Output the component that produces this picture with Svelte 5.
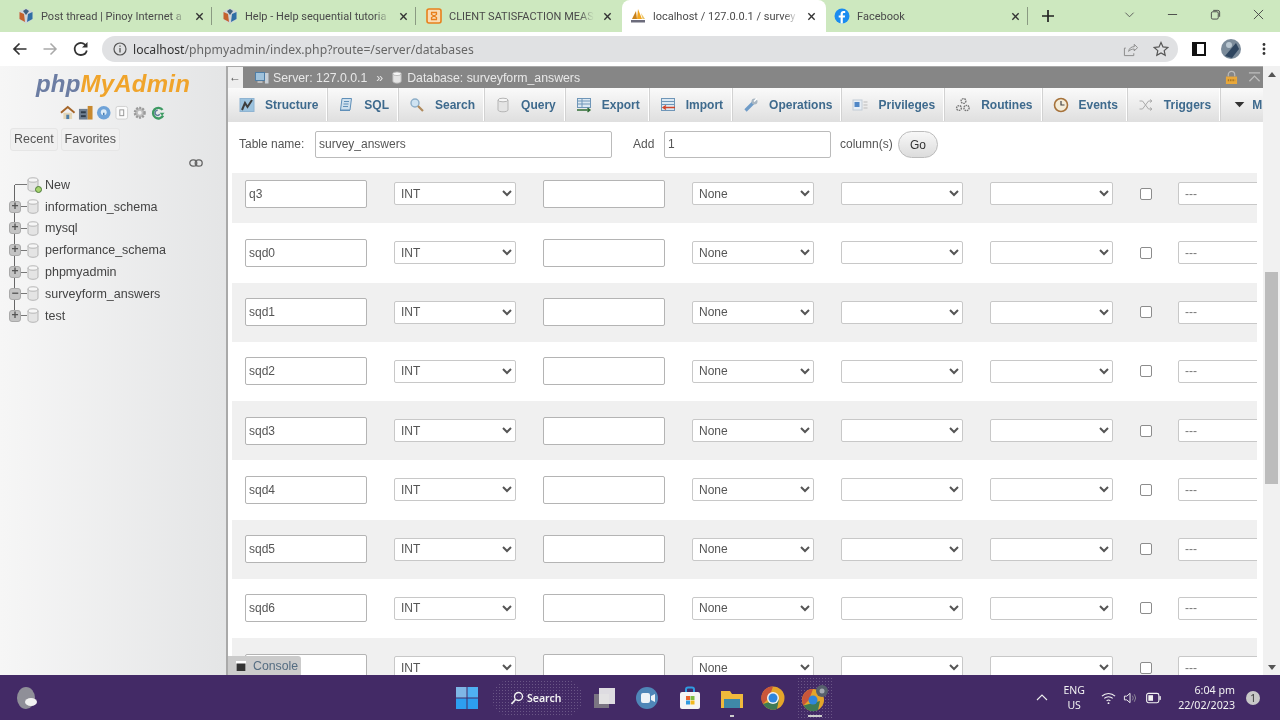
<script>
  const browserTabs = [
    { icon: 'cube', title: 'Post thread | Pinoy Internet a' },
    { icon: 'cube', title: 'Help - Help sequential tutoria' },
    { icon: 'xampp', title: 'CLIENT SATISFACTION MEAS' },
    { icon: 'sail', title: 'localhost / 127.0.0.1 / survey', active: true },
    { icon: 'fb', title: 'Facebook' }
  ];
  const dbs = [
    { n: 'information_schema', s: '+' },
    { n: 'mysql', s: '+' },
    { n: 'performance_schema', s: '+' },
    { n: 'phpmyadmin', s: '+' },
    { n: 'surveyform_answers', s: '-' },
    { n: 'test', s: '+' }
  ];
  const navTabs = [
    ['structure', 'Structure'], ['sql', 'SQL'], ['search', 'Search'], ['query', 'Query'],
    ['export', 'Export'], ['import', 'Import'], ['ops', 'Operations'], ['priv', 'Privileges'],
    ['routines', 'Routines'], ['events', 'Events'], ['triggers', 'Triggers']
  ];
  const rows = ['q3', 'sqd0', 'sqd1', 'sqd2', 'sqd3', 'sqd4', 'sqd5', 'sqd6', ''];
</script>

{#snippet fav(k)}
  <svg class="fav" viewBox="0 0 16 16">
    {#if k === 'cube'}
      <polygon points="8,0.500 14.500,3 14.500,11.500 8,15.500 1.500,11.500 1.500,3" fill="#cfd4d8" />
      <polygon points="1.500,4 6,6 7,14 1.500,11" fill="#c4622d" />
      <polygon points="14.500,4 10,6 9,14 14.500,11" fill="#2f6ea5" />
      <polygon points="5,3 8,1 11,3 8,7" fill="#3f5f7f" />
    {:else if k === 'xampp'}
      <rect x="1" y="1" width="14" height="14" rx="2" fill="#f9dcb4" stroke="#e8801c" stroke-width="1.600" />
      <path d="M5 4.500h6M5 11.500h6M5.500 4.500v2l5 3v2M10.500 4.500v2l-5 3v2" stroke="#e8801c" stroke-width="1.300" fill="none" />
    {:else if k === 'sail'}
      <polygon points="8,1 12,11 7,11" fill="#f2a51f" />
      <polygon points="6,3 7,11 2,11" fill="#c9821a" />
      <polygon points="11,5 15,11 12.500,11" fill="#e9c46a" />
      <rect x="1" y="12" width="14" height="2.500" fill="#6c6c7c" />
    {:else}
      <circle cx="8" cy="8" r="7.500" fill="#1a8cf0" />
      <path d="M8.800 15.400V9.600h2l.3-2.200H8.800V6c0-.7.3-1.100 1.200-1.100h1.200V3c-.4 0-1-.1-1.700-.1-1.800 0-2.900 1-2.900 2.900v1.600H4.700v2.200h1.900v5.800z" fill="#fff" />
    {/if}
  </svg>
{/snippet}

{#snippet cyl(w = 12)}
  <svg width={w} height="15" viewBox="0 0 12 15">
    <path d="M1 3v9c0 1.300 2.200 2.300 5 2.300s5-1 5-2.300V3z" fill="#e4e4e4" stroke="#b5b5b5" />
    <ellipse cx="6" cy="3" rx="5" ry="2.200" fill="#f6f6f6" stroke="#b5b5b5" />
  </svg>
{/snippet}

{#snippet nav(k)}
  <svg class="nav-ic" viewBox="0 0 16 16">
    {#if k === 'structure'}
      <rect x="1" y="1.500" width="14" height="13" fill="#9cc3df" stroke="#8fb4d2" />
      <path d="M3 13l3-7 2.500 4L13 3" stroke="#3d3d3d" stroke-width="2" fill="none" />
    {:else if k === 'sql'}
      <path d="M4 1.500h9.500L12 13H2.500z" fill="#cfe0ee" stroke="#5f8fb8" />
      <path d="M2 13.500h10M6 4.500h5M5.500 7h5M5 9.500h5" stroke="#5f8fb8" fill="none" />
    {:else if k === 'search'}
      <circle cx="6" cy="6" r="4" fill="#cfe3f2" stroke="#8daec8" stroke-width="1.400" />
      <path d="M9 9l5 5" stroke="#b08a5c" stroke-width="2.200" />
    {:else if k === 'query'}
      <path d="M3 3v10c0 1 2.300 1.800 5 1.800s5-.8 5-1.800V3z" fill="#e4e4e4" stroke="#b5b5b5" />
      <ellipse cx="8" cy="3" rx="5" ry="1.800" fill="#f6f6f6" stroke="#b5b5b5" />
    {:else if k === 'export'}
      <rect x="1.500" y="1.500" width="13" height="9" fill="#dce8f2" stroke="#6f96b8" />
      <path d="M1.500 4h13M1.500 7h13M6 1.500v9" stroke="#6f96b8" />
      <path d="M1 13h13M11.500 11l2.500 2-2.500 2" stroke="#2f6c35" stroke-width="1.300" fill="none" />
    {:else if k === 'import'}
      <rect x="1.500" y="1.500" width="13" height="12" fill="#dce8f2" stroke="#6f96b8" />
      <path d="M1.500 4.500h13M1.500 7.500h13" stroke="#6f96b8" />
      <path d="M15 10.500H3M6 8.500l-3 2 3 2" stroke="#d2452a" stroke-width="1.300" fill="none" />
    {:else if k === 'ops'}
      <path d="M2.500 13.500L10 6" stroke="#6f9cc8" stroke-width="3.200" />
      <circle cx="11.500" cy="4.500" r="3" fill="#a8b6c2" />
      <path d="M11 4.500l3-3" stroke="#fff" stroke-width="1.600" />
    {:else if k === 'priv'}
      <rect x="1" y="3" width="9" height="10" fill="#e6eef6" stroke="#c2ccd6" />
      <rect x="2.500" y="5" width="5" height="5" fill="#4f86c6" />
      <path d="M11.500 5h4M11.500 8h4M11.500 11h4" stroke="#bbb" />
    {:else if k === 'routines'}
      <circle cx="8.500" cy="4" r="2.400" fill="none" stroke="#777" stroke-width="1.400" stroke-dasharray="1.500 .7" />
      <circle cx="4" cy="11" r="2.400" fill="none" stroke="#777" stroke-width="1.400" stroke-dasharray="1.500 .7" />
      <circle cx="11.500" cy="11" r="2.600" fill="none" stroke="#777" stroke-width="1.400" stroke-dasharray="1.500 .7" />
    {:else if k === 'events'}
      <circle cx="8" cy="8" r="6.500" fill="#f4ecd8" stroke="#a6723a" stroke-width="1.600" />
      <path d="M8 4v4h3.500" stroke="#444" stroke-width="1.200" fill="none" />
    {:else}
      <path d="M1.500 4h3l6 8h3M1.500 12h3l6-8h3M12 2.500L14 4l-2 1.500M12 10.500l2 1.500-2 1.500" stroke="#aaa" fill="none" />
    {/if}
  </svg>
{/snippet}

<div class="screen">
  <div class="strip">
    {#each browserTabs as t}
      <div class="btab" class:active={t.active}>
        {@render fav(t.icon)}
        <span class="btitle">{t.title}</span>
        <svg class="bclose" viewBox="0 0 10 10"><path d="M1.500 1.500l7 7M8.500 1.500l-7 7" stroke="#333" stroke-width="1.500" /></svg>
      </div>
    {/each}
    <svg class="plus" viewBox="0 0 12 12"><path d="M6 0v12M0 6h12" stroke="#222" stroke-width="1.700" /></svg>
    <div class="winctl">
      <svg viewBox="0 0 12 12"><path d="M1.500 4l4.500 4.500L10.500 4" stroke="#555" fill="none" /></svg>
      <svg viewBox="0 0 12 12"><path d="M1 6h10" stroke="#444" /></svg>
      <svg viewBox="0 0 12 12"><rect x="1.500" y="3" width="7.500" height="8" rx="1.500" fill="none" stroke="#444" /><path d="M3.500 1.500h5a2 2 0 012 2v5" fill="none" stroke="#444" /></svg>
      <svg viewBox="0 0 12 12"><path d="M1 1l10 10M11 1L1 11" stroke="#444" /></svg>
    </div>
  </div>

  <div class="toolbar">
    <svg class="tb" viewBox="0 0 16 16"><path d="M14.500 8H2M7.500 2.500L2 8l5.500 5.500" stroke="#333" stroke-width="1.700" fill="none" /></svg>
    <svg class="tb" viewBox="0 0 16 16"><path d="M1.500 8H14M8.500 2.500L14 8l-5.500 5.500" stroke="#a9a9a9" stroke-width="1.500" fill="none" /></svg>
    <svg class="tb" viewBox="0 0 16 16"><path d="M13 5.200A6 6 0 108 14a6 6 0 005.800-4.500" stroke="#333" stroke-width="1.800" fill="none" /><path d="M14.500 1v5.500H9z" fill="#333" /></svg>
    <div class="addr">
      <svg class="info" viewBox="0 0 14 14"><circle cx="7" cy="7" r="6" fill="none" stroke="#555" stroke-width="1.200" /><path d="M7 6v4.500M7 3.500v1.300" stroke="#555" stroke-width="1.300" /></svg>
      <span class="url"><span class="host">localhost</span>/phpmyadmin/index.php?route=/server/databases</span>
      <svg class="share" viewBox="0 0 16 16"><path d="M3 6.500H1.500v8h10V12M6 10c.5-3.500 3-5 6-5V2.500L15.500 6 12 9.500V7.500c-2.500 0-4.500.8-6 2.500z" fill="none" stroke="#888" /></svg>
      <svg class="star" viewBox="0 0 16 16"><path d="M8 1.500l2 4.400 4.800.5-3.600 3.200 1 4.700L8 11.900l-4.200 2.400 1-4.700L1.200 6.400 6 5.900z" fill="none" stroke="#555" stroke-width="1.200" /></svg>
    </div>
    <div class="tools">
      <svg class="tool" viewBox="0 0 14 14"><rect x="1" y="1" width="12" height="12" fill="#fff" stroke="#111" stroke-width="2" /><rect x="1" y="1" width="4" height="12" fill="#111" /></svg>
      <svg class="avatar" viewBox="0 0 20 20"><circle cx="10" cy="10" r="10" fill="#7b8b9a" /><path d="M4 17L15 4l3 6-7 9z" fill="#2f4660" /><circle cx="8" cy="6" r="3" fill="#b9c6d0" /></svg>
      <svg class="tool" viewBox="0 0 14 14"><circle cx="7" cy="2.500" r="1.400" fill="#333" /><circle cx="7" cy="7" r="1.400" fill="#333" /><circle cx="7" cy="11.500" r="1.400" fill="#333" /></svg>
    </div>
  </div>

  <div class="content">
    <aside class="side">
      <div class="logo"><span class="php">php</span><span class="my">MyAdmin</span></div>
      <div class="quick">
        <svg viewBox="0 0 16 16"><path d="M1 8l7-6 7 6" stroke="#a5662a" stroke-width="2" fill="none" /><rect x="3.500" y="8" width="9" height="6.500" fill="#e4d7b8" /><rect x="6.500" y="10" width="3" height="4.500" fill="#4f7fa8" /></svg>
        <svg viewBox="0 0 16 16"><rect x="1" y="4" width="9" height="11" fill="#6f7f92" /><rect x="10" y="1" width="5" height="14" fill="#c8892e" /><rect x="3" y="6.500" width="5" height="2" fill="#2e3b4a" /><rect x="3" y="10.500" width="5" height="2" fill="#2e3b4a" /></svg>
        <svg viewBox="0 0 16 16"><circle cx="8" cy="8" r="7" fill="#6fa3d8" /><circle cx="8" cy="7.500" r="3" fill="#dcebf7" /><path d="M8 8v2.500" stroke="#3f78b0" stroke-width="1.500" /></svg>
        <svg viewBox="0 0 16 16"><rect x="2" y="1.500" width="12" height="13" rx="2" fill="#fbfbfb" stroke="#cfcfcf" /><rect x="6" y="5" width="4" height="6" fill="none" stroke="#999" /></svg>
        <svg viewBox="0 0 16 16"><circle cx="8" cy="8" r="5" fill="#bdbdbd" stroke="#9a9a9a" stroke-width="2.500" stroke-dasharray="2 1.200" /><circle cx="8" cy="8" r="2" fill="#eee" /></svg>
        <svg viewBox="0 0 16 16"><path d="M13 5a5.500 5.500 0 10.500 6" stroke="#3e9a63" stroke-width="2.400" fill="none" /><path d="M8 5.500a2.600 2.600 0 102 4" stroke="#5f7c9a" stroke-width="1.600" fill="none" /><path d="M10 8h5l-2.500 3z" fill="#3e9a63" /></svg>
      </div>
      <div class="pills"><span class="pill">Recent</span><span class="pill">Favorites</span></div>
      <div class="linkrow">
        <svg viewBox="0 0 14 8"><rect x=".8" y=".8" width="7" height="6.400" rx="3.200" fill="none" stroke="#666" stroke-width="1.300" /><rect x="6.200" y=".8" width="7" height="6.400" rx="3.200" fill="none" stroke="#666" stroke-width="1.300" /></svg>
      </div>
      <ul class="tree">
        <li class="tree-new">
          <span class="exp none"></span><span class="dash"></span>
          <span class="dbi">{@render cyl()}<i class="greendot"></i></span>
          <span>New</span>
        </li>
        {#each dbs as d}
          <li>
            <span class="exp">{d.s === '+' ? '+' : '−'}</span><span class="dash"></span>
            <span class="dbi">{@render cyl()}</span>
            <span>{d.n}</span>
          </li>
        {/each}
      </ul>
    </aside>

    <main class="main">
      <div class="crumbs">
        <span class="back">←</span>
        <svg class="crumb-ic srv" viewBox="0 0 14 12"><rect x=".5" y=".5" width="9" height="8" fill="#9fc2dc" stroke="#4f7ea6" /><rect x="10" y="1" width="3.500" height="10.500" fill="#c8d0d8" /><rect x="2.500" y="9" width="5" height="2" fill="#bbb" /></svg>
        <span>Server: 127.0.0.1</span>
        <span class="raquo">»</span>
        <span class="crumb-db">{@render cyl(10)}</span>
        <span>Database: surveyform_answers</span>
        <span class="crumb-right">
          <svg viewBox="0 0 14 16"><path d="M3.500 7V5a3.500 3.500 0 017 0v2" fill="none" stroke="#bbb" stroke-width="1.300" /><rect x="1" y="7" width="12" height="8" fill="#e9a83a" /><path d="M3 11h8" stroke="#a8741f" stroke-dasharray="1.500 1" stroke-width="2" /></svg>
          <svg viewBox="0 0 14 12"><path d="M1 1h12M1.500 10L7 4.500 12.500 10" stroke="#bdbdbd" stroke-width="1.400" fill="none" /></svg>
        </span>
      </div>

      <nav class="navtabs">
        {#each navTabs as [k, label]}
          <div class="ntab">{@render nav(k)}<span>{label}</span></div>
        {/each}
        <div class="ntab more"><svg class="caret" viewBox="0 0 12 8"><polygon points="0.500,1 11.500,1 6,7" fill="#333" /></svg><span>M</span></div>
      </nav>

      <div class="form">
        <label class="lab1" for="tn">Table name:</label>
        <input id="tn" class="tname" value="survey_answers" />
        <label class="lab2" for="ad">Add</label>
        <input id="ad" class="tadd" value="1" />
        <span class="lab3">column(s)</span>
        <button class="go">Go</button>
      </div>

      <div class="window">
        <div class="rows">
          {#each rows as r, i}
            <div class="row" class:alt={i % 2 === 0}>
              <input class="cell name" value={r} />
              <select class="cell"><option>INT</option></select>
              <input class="cell name" value="" />
              <select class="cell"><option>None</option></select>
              <select class="cell"><option></option></select>
              <select class="cell wide"><option></option></select>
              <input class="chk" type="checkbox" />
              <select class="cell last"><option>---</option></select>
            </div>
          {/each}
        </div>
      </div>

      <div class="console">
        <svg viewBox="0 0 12 12"><rect x=".5" y=".5" width="11" height="11" fill="#fff" stroke="#ccc" /><rect x="1.500" y="3.500" width="9" height="7.500" fill="#333" /></svg>
        <span>Console</span>
      </div>
    </main>

    <div class="scroll">
      <svg class="arrow" viewBox="0 0 8 5"><polygon points="4,0 8,5 0,5" fill="#555" /></svg>
      <div class="thumb"></div>
      <svg class="arrow down" viewBox="0 0 8 5"><polygon points="0,0 8,0 4,5" fill="#555" /></svg>
    </div>
  </div>

  <footer class="taskbar">
    <div class="tleft">
      <svg class="weather" viewBox="0 0 22 24"><ellipse cx="10" cy="12" rx="9" ry="11" fill="#8f8f98" /><ellipse cx="15" cy="16" rx="6" ry="4" fill="#f1f1f1" /></svg>
    </div>
    <div class="tcenter">
      <svg class="win" viewBox="0 0 22 22"><rect width="10.500" height="10.500" fill="#7fb6e6" /><rect x="11.500" width="10.500" height="10.500" fill="#4fb0f2" /><rect y="11.500" width="10.500" height="10.500" fill="#2d9ef0" /><rect x="11.500" y="11.500" width="10.500" height="10.500" fill="#2d9ef0" /></svg>
      <div class="tsearch">
        <svg viewBox="0 0 14 14"><circle cx="8.500" cy="5.500" r="4" fill="none" stroke="#f2f2f2" stroke-width="1.400" /><path d="M5.500 8.500L1.500 13" stroke="#f2f2f2" stroke-width="1.600" /></svg>
        <span>Search</span>
      </div>
      <svg class="ti view" viewBox="0 0 24 24"><rect x="1" y="8" width="15" height="14" fill="#7a7482" /><rect x="6" y="2" width="16" height="16" fill="#ececec" opacity=".92" /></svg>
      <svg class="ti" viewBox="0 0 24 24"><circle cx="12" cy="12" r="11" fill="#4f86b8" /><rect x="6" y="7" width="9" height="10" rx="2" fill="#eef3f8" /><path d="M16 10l4-2v8l-4-2z" fill="#eef3f8" /></svg>
      <svg class="ti" viewBox="0 0 24 24"><path d="M8 6V3.500a2 2 0 012-2h4a2 2 0 012 2V6" fill="none" stroke="#2f9ae0" stroke-width="2" /><rect x="2" y="6" width="20" height="17" rx="2" fill="#f4f4f4" /><rect x="8" y="10" width="4" height="4" fill="#e8622c" /><rect x="12.500" y="10" width="4" height="4" fill="#7dbb3f" /><rect x="8" y="14.500" width="4" height="4" fill="#2f9ae0" /><rect x="12.500" y="14.500" width="4" height="4" fill="#f2b91e" /></svg>
      <div class="ti-wrap">
        <svg class="ti" viewBox="0 0 24 24"><path d="M1 5h9l2 3h11v14H1z" fill="#f0b93c" /><rect x="4" y="13" width="16" height="9" fill="#3f88a8" /></svg>
        <i class="run"></i>
      </div>
      <svg class="ti" viewBox="0 0 24 24"><circle cx="12" cy="12" r="11.500" fill="#e4a52a" /><path d="M12 .5A11.500 11.500 0 002 18l6-6z" fill="#c9563a" /><path d="M2 18a11.500 11.500 0 0014 5l2-10z" fill="#3f7a55" /><circle cx="12" cy="12" r="6" fill="#f2f2f2" /><circle cx="12" cy="12" r="4.500" fill="#2f86dc" /></svg>
      <div class="ti-wrap act">
        <svg class="ti big" viewBox="0 0 28 28"><circle cx="12" cy="16" r="11" fill="#e4a52a" /><path d="M12 5A11 11 0 002.500 21.500L8 16z" fill="#c9563a" /><path d="M2.500 21.500A11 11 0 0017 26l2-9z" fill="#3f7a55" /><circle cx="12" cy="16" r="4.500" fill="#2f86dc" /><circle cx="21" cy="7" r="6" fill="#56606c" /><circle cx="21" cy="7" r="2.500" fill="#a4aab2" /></svg>
        <i class="run long"></i>
      </div>
    </div>
    <div class="tright">
      <svg class="caretup" viewBox="0 0 12 7"><path d="M1 6l5-5 5 5" fill="none" stroke="#eee" stroke-width="1.100" /></svg>
      <div class="lang"><span>ENG</span><span>US</span></div>
      <svg class="sys wifi" viewBox="0 0 16 14"><path d="M1 5a10 10 0 0114 0M3.500 7.500a6.500 6.500 0 019 0M6 10a3 3 0 014 0" fill="none" stroke="#f2f2f2" stroke-width="1.200" /><circle cx="8" cy="12.500" r="1" fill="#f2f2f2" /></svg>
      <svg class="sys" viewBox="0 0 16 14"><path d="M1.500 5v4h2.500l3.500 3V2L4 5z" fill="none" stroke="#f2f2f2" /><path d="M10 4.500a4 4 0 010 5M12 3a6.500 6.500 0 010 8" fill="none" stroke="#8f8a9a" /></svg>
      <svg class="sys" viewBox="0 0 16 12"><rect x=".7" y="1" width="13" height="10" rx="2" fill="none" stroke="#f2f2f2" stroke-width="1.200" /><rect x="2.500" y="3" width="5" height="6" fill="#f2f2f2" /><rect x="14.300" y="4" width="1.500" height="4" fill="#f2f2f2" /></svg>
      <div class="clock"><span>6:04 pm</span><span>22/02/2023</span></div>
      <span class="badge">1</span>
    </div>
  </footer>
</div>

<style>
  :global(body) { margin: 0; background: #fff; }
  .screen {
    width: 1280px; height: 720px; overflow: hidden; display: flex; flex-direction: column;
    font-family: "Liberation Sans", Arial, sans-serif; filter: blur(0.4px);
  }

  .strip { height: 32px; background: #cde8bf; display: flex; align-items: stretch; padding-left: 10px; box-sizing: border-box; }
  .btab {
    width: 204px; box-sizing: border-box; display: flex; align-items: center; gap: 7px; padding: 0 10px 0 8px;
    position: relative; font: 11px Roboto, sans-serif; color: #4a4a4a;
  }
  .btab::after { content: ""; position: absolute; right: 2px; top: 7px; height: 18px; width: 1px; background: #8a9a82; }
  .btab:nth-child(3)::after, .btab.active::after { display: none; }
  .btab.active { background: #fff; border-radius: 8px 8px 0 0; }
  .fav { width: 16px; height: 16px; flex: none; }
  .btitle {
    flex: 1; min-width: 0; white-space: nowrap;
    -webkit-mask-image: linear-gradient(90deg, #000 90%, transparent);
    mask-image: linear-gradient(90deg, #000 90%, transparent);
  }
  .bclose { width: 9px; height: 9px; flex: none; margin-left: 2px; }
  .plus { width: 12px; height: 12px; align-self: center; margin-left: 12px; }
  .winctl { margin-left: auto; display: flex; align-items: center; padding-bottom: 4px; }
  .winctl svg { width: 11px; height: 11px; padding: 0 16px; }

  .toolbar { height: 34px; background: #fff; display: flex; align-items: center; padding-left: 5px; box-sizing: border-box; }
  .tb { width: 16px; height: 16px; padding: 0 7px; flex: none; }
  .tb:nth-child(3) { padding-left: 8px; }
  .addr {
    flex: 1; height: 26px; margin-left: 6px; background: #e0e1e3; border-radius: 13px; display: flex; align-items: center;
    padding: 0 9px 0 11px; font: 12.2px "Noto Sans", sans-serif; color: #666;
  }
  .info { width: 14px; height: 14px; margin-right: 6px; }
  .url { flex: 1; white-space: nowrap; }
  .host { color: #333; }
  .share { width: 15px; height: 15px; margin-right: 15px; }
  .star { width: 16px; height: 16px; }
  .tools { display: flex; align-items: center; width: 102px; box-sizing: border-box; padding-left: 14px; gap: 15px; }
  .tool { width: 14px; height: 14px; }
  .avatar { width: 20px; height: 20px; }
  .tools .tool:last-child { margin-left: 1px; }

  .content { height: 609px; display: flex; background: #fff; }

  .side {
    width: 226px; flex: none; box-sizing: border-box; padding-top: 2px;
    background: linear-gradient(90deg, #f6f6f6, #e4e5e6); color: #444; font-size: 12.500px;
  }
  .logo { text-align: center; font: italic bold 24px "Liberation Sans", sans-serif; letter-spacing: .2px; height: 36px; line-height: 32px; }
  .php { color: #6c7da3; }
  .my { color: #f0a42b; }
  .quick { display: flex; justify-content: center; gap: 2.500px; height: 18px; align-items: center; }
  .quick svg { width: 15.500px; height: 15.500px; }
  .pills { display: flex; gap: 3px; padding: 6px 0 0 10px; }
  .pill { height: 21px; line-height: 21px; padding: 0 3px; background: #f0f0f0; border: 1px solid #e6e6e6; border-radius: 3px; color: #555; }
  .linkrow { height: 20px; display: flex; align-items: center; justify-content: flex-end; padding: 2px 23px 0 0; box-sizing: content-box; }
  .linkrow svg { width: 14px; height: 8px; }
  .tree { list-style: none; margin: 1px 0 0; padding: 0 0 0 9px; position: relative; }
  .tree::before { content: ""; position: absolute; left: 14px; top: 11px; height: 131px; width: 1px; background: #666; }
  .tree li { height: 21.800px; display: flex; align-items: center; position: relative; color: #444; }
  .exp {
    width: 12px; height: 12px; flex: none; box-sizing: border-box; border-radius: 3px; background: #c4c4c4; border: 1px solid #aaa;
    font: bold 12px/9px "Liberation Sans", sans-serif; text-align: center; color: #555; position: relative; z-index: 1;
  }
  .exp.none { background: none; border: 0; }
  .dash { width: 6px; height: 1px; background: #777; flex: none; }
  .tree-new .dash { width: 12px; margin-left: -6px; }
  .dbi { width: 12px; height: 15px; flex: none; margin-right: 6px; position: relative; line-height: 0; }
  .greendot { position: absolute; right: -3px; bottom: -1px; width: 5px; height: 5px; border-radius: 50%; background: #a8d46f; border: 1px solid #4d7a3a; }

  .main {
    width: 1037px; flex: none; box-sizing: border-box; border-left: 2px solid #a9a9a9; position: relative;
    display: flex; flex-direction: column; overflow: hidden;
  }
  .crumbs {
    height: 22px; flex: none; background: #868686; color: #e8e8e8; display: flex; align-items: center; font-size: 12.300px;
    box-sizing: border-box; border-top: 1px solid #aaa; white-space: nowrap;
  }
  .back { width: 27px; padding-left: 1px; box-sizing: border-box; background: linear-gradient(90deg, #eee 15px, transparent 15px); color: #555; height: 100%; line-height: 20px; font-size: 12px; }
  .crumb-ic { width: 14px; height: 12px; margin-right: 4px; }
  .raquo { margin: 0 9px; }
  .crumb-db { width: 10px; height: 15px; line-height: 0; margin-right: 5px; margin-top: -1px; }
  .crumb-right { margin-left: auto; display: flex; align-items: center; gap: 10px; padding-right: 2px; }
  .crumb-right svg { width: 13px; height: 15px; }

  .navtabs {
    height: 34px; flex: none; display: flex; background: linear-gradient(#fafafa, #dfdfdf); overflow: hidden; box-sizing: border-box; padding-bottom: 1px;
    font-weight: bold; font-size: 12px; color: #3e6a8d;
  }
  .ntab {
    display: flex; align-items: center; gap: 10px; padding: 0 8px 0 11px; border-right: 1px solid #fff; box-shadow: 1px 0 0 #d2d2d2 inset;
    white-space: nowrap; flex: none;
  }
  .ntab:first-child { box-shadow: none; }
  .nav-ic { width: 16px; height: 16px; flex: none; }
  .caret { width: 11px; height: 7px; flex: none; }
  .more { gap: 7px; padding-left: 14px; }

  .form {
    height: 51px; flex: none; display: flex; align-items: center; font-size: 12px; color: #555; box-sizing: border-box; padding-bottom: 7px;
  }
  .lab1 { margin-left: 11px; width: 76px; }
  .form input { height: 27px; box-sizing: border-box; border: 1px solid #bbb; border-radius: 2px; font: 12px "Liberation Sans", sans-serif; color: #555; padding: 0 3px; background: #fff; }
  .tname { width: 297px; }
  .lab2 { margin-left: 21px; width: 31px; }
  .tadd { width: 167px; }
  .lab3 { margin-left: 9px; width: 58px; }
  .go {
    width: 40px; height: 27px; margin-top: 1px; border-radius: 14px; border: 1px solid #bcbcbc; background: linear-gradient(#f8f8f8, #dcdcdc);
    font: 12px "Liberation Sans", sans-serif; color: #333; padding: 0;
  }

  .window { margin-left: 4px; width: 1025px; flex: 1; min-height: 0; overflow: hidden; }
  .rows { margin-top: -9px; width: 1060px; }
  .row { height: 59.250px; display: flex; align-items: center; padding-left: 13px; box-sizing: border-box; gap: 27px; }
  .row.alt { background: linear-gradient(90deg, #f0f0f0 1025px, transparent 1025px); }
  .cell {
    width: 122px; height: 23px; flex: none; box-sizing: border-box; border: 1px solid #c8c8c8; border-radius: 2px; background-color: #fff;
    font: 12px "Liberation Sans", sans-serif; color: #555; padding: 0 2px;
  }
  input.cell { height: 28px; padding: 0 3px; border-color: #b4b4b4; }
  .wide { width: 123px; }
  .chk { appearance: none; box-sizing: border-box; width: 12px; height: 12px; margin: 0; flex: none; margin-right: -1px; background: #fff; border: 1px solid #8c8c8c; border-radius: 2px; }
  .last { width: 140px; color: #777; }

  .console {
    position: absolute; left: 0; bottom: 0; width: 73px; height: 19px; background: #cbcbcb; color: #556d82; font-size: 12.300px;
    display: flex; align-items: center; gap: 6px; padding-left: 7px; box-sizing: border-box; border-top-right-radius: 3px;
  }
  .console svg { width: 12px; height: 12px; }

  .scroll { flex: 1; background: #f1f1f1; display: flex; flex-direction: column; align-items: center; position: relative; }
  .arrow { width: 8px; height: 5px; margin-top: 6px; flex: none; }
  .arrow.down { margin: auto 0 5px; }
  .thumb { width: 13px; height: 212px; background: #bcbcbc; margin-top: 195px; flex: none; }

  .taskbar { height: 45px; flex: none; background: #432a66; display: flex; align-items: center; color: #f2f2f2; font-family: "Noto Sans", sans-serif; }
  .tleft { width: 456px; flex: none; box-sizing: border-box; padding-left: 16px; display: flex; }
  .weather { width: 22px; height: 24px; }
  .tcenter { display: flex; align-items: center; }
  .win { width: 22px; height: 22px; }
  .tsearch {
    width: 91px; height: 36px; margin-left: 14px; box-sizing: border-box; border-radius: 18px;
    background-image: radial-gradient(circle, #6a5686 0.7px, transparent 0.9px); background-size: 3px 3px;
    display: flex; align-items: center; gap: 3px; padding-left: 18px; font-size: 10.500px; font-weight: 600;
  }
  .tsearch svg { width: 14px; height: 14px; }
  .ti { width: 24px; height: 24px; flex: none; }
  .view { margin-left: 10px; }
  .view + .ti { margin-left: 18px; }
  .view + .ti + .ti { margin-left: 19px; }
  .ti-wrap { position: relative; margin-left: 18px; display: flex; }
  .ti-wrap + .ti { margin-left: 17px; }
  .ti-wrap.act {
    margin-left: 12px; width: 35px; height: 41px; box-sizing: border-box; align-items: center; justify-content: center;
    background-image: radial-gradient(circle, #6a5686 0.7px, transparent 0.9px); background-size: 3px 3px;
  }
  .big { width: 28px; height: 28px; }
  .run { position: absolute; left: 50%; bottom: -7px; width: 4px; height: 2px; margin-left: -2px; background: #ccc; }
  .run.long { width: 14px; margin-left: -7px; bottom: 1px; }
  .tright { margin-left: auto; display: flex; align-items: center; padding-right: 20px; }
  .caretup { width: 12px; height: 7px; margin-right: 12px; }
  .lang { display: flex; flex-direction: column; align-items: center; font-size: 10.500px; line-height: 15px; width: 28px; margin-right: 13px; }
  .sys { width: 15px; height: 14px; margin-right: 7px; }
  .sys:last-of-type { margin-left: 1px; }
  .clock { display: flex; flex-direction: column; align-items: flex-end; font-size: 10.700px; line-height: 15px; margin-left: 10px; }
  .badge { width: 14px; height: 14px; margin-left: 11px; border-radius: 50%; background: #c8c8c8; color: #333; font-size: 10px; line-height: 14px; text-align: center; }
</style>
